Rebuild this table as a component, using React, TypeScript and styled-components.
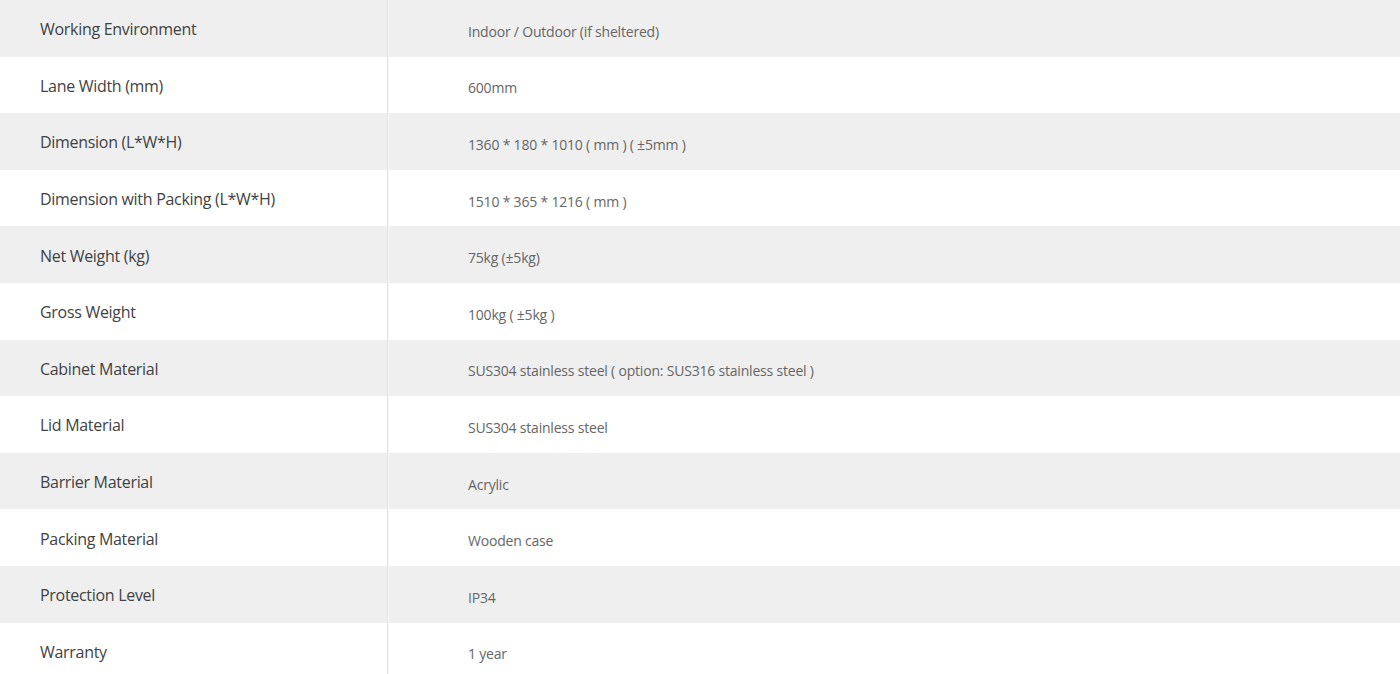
import React from 'react'
import styled, { createGlobalStyle } from 'styled-components'

interface Spec {
  label: string
  value: string
}

const specs: Spec[] = [
  { label: 'Working Environment', value: 'Indoor / Outdoor (if sheltered)' },
  { label: 'Lane Width (mm)', value: '600mm' },
  { label: 'Dimension (L*W*H)', value: '1360 * 180 * 1010 ( mm ) ( ±5mm )' },
  { label: 'Dimension with Packing (L*W*H)', value: '1510 * 365 * 1216 ( mm )' },
  { label: 'Net Weight (kg)', value: '75kg (±5kg)' },
  { label: 'Gross Weight', value: '100kg ( ±5kg )' },
  { label: 'Cabinet Material', value: 'SUS304 stainless steel ( option: SUS316 stainless steel )' },
  { label: 'Lid Material', value: 'SUS304 stainless steel' },
  { label: 'Barrier Material', value: 'Acrylic' },
  { label: 'Packing Material', value: 'Wooden case' },
  { label: 'Protection Level', value: 'IP34' },
  { label: 'Warranty', value: '1 year' }
]

const GlobalStyle = createGlobalStyle`
  html, body {
    margin: 0;
    padding: 0;
    background: #ffffff;
  }
  body {
    font-family: "Open Sans", "Noto Sans", Arial, sans-serif;
  }
`

const Table = styled.div`
  width: 100%;
  display: flex;
  flex-direction: column;
`

const Row = styled.div<{ $striped: boolean }>`
  display: grid;
  grid-template-columns: 388px 1fr;
  height: 56.6px;
  background: ${props => (props.$striped ? '#efefef' : '#ffffff')};
`

const Label = styled.div`
  display: flex;
  align-items: center;
  padding: 2px 0 0 40px;
  font-size: 16px;
  letter-spacing: -0.3px;
  color: #424242;
  border-right: 1px solid #e3e3e3;
`

const Value = styled.div`
  display: flex;
  align-items: center;
  padding: 6px 0 0 79px;
  font-size: 14px;
  letter-spacing: -0.2px;
  color: #666666;
  border-left: 1px solid #f8f8f8;
`

export default function App() {
  return (
    <>
      <GlobalStyle />
      <Table>
        {specs.map((spec, index) => (
          <Row key={index} $striped={index % 2 === 0}>
            <Label>{spec.label}</Label>
            <Value>{spec.value}</Value>
          </Row>
        ))}
      </Table>
    </>
  )
}
